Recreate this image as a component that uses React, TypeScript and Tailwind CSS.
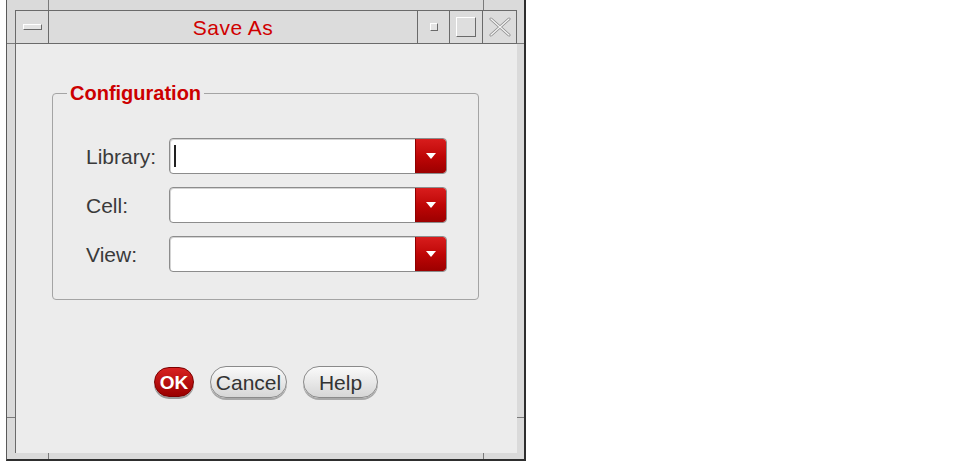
const sans = "font-['Liberation_Sans',Arial,sans-serif]";

const Combo = ({ cursor = false }: { cursor?: boolean }) => (
  <div className="flex h-[36px] w-[278px] overflow-hidden rounded-[4px] border border-[#8c8c8c] bg-white shadow-[inset_1px_1px_0_#d4d4d4]">
    <div className="flex flex-1 items-center pl-[4px]">
      {cursor && <span className="h-[22px] w-[2px] bg-[#222]" />}
    </div>
    <div className="flex w-[31px] items-center justify-center rounded-r-[3px] border-l border-[#8f0000] bg-gradient-to-b from-[#d81c1c] via-[#bf0606] to-[#9c0000]">
      <svg width="10" height="6" viewBox="0 0 10 6">
        <path d="M0 0h10L5 6z" fill="#fff" />
      </svg>
    </div>
  </div>
);

const Row = ({ label, cursor }: { label: string; cursor?: boolean }) => (
  <div className="flex items-center">
    <span className="w-[116px] shrink-0 pl-[33px] text-[21px] leading-none text-[#3a3a3a]">{label}</span>
    <Combo cursor={cursor} />
  </div>
);

const Tick = ({ className }: { className: string }) => (
  <span className={`absolute bg-[#7a7a7a] ${className}`} />
);

export default function App() {
  return (
    <div className={`flex h-[467px] w-[957px] bg-white pl-[6px] ${sans}`}>
      <div className="relative flex h-[461px] w-[520px] flex-col border-b-2 border-l border-r-2 border-b-[#2e2e2e] border-l-[#5a5a5a] border-r-[#2e2e2e] bg-[#dadada] pb-[6px] pl-[8px] pr-[7px] pt-[10px]">
        <Tick className="left-[41px] top-0 h-[10px] w-px" />
        <Tick className="left-[476px] top-0 h-[10px] w-px" />
        <Tick className="bottom-0 left-[41px] h-[6px] w-px" />
        <Tick className="bottom-0 left-[476px] h-[6px] w-px" />
        <Tick className="left-0 top-[43px] h-px w-[8px]" />
        <Tick className="left-0 top-[417px] h-px w-[8px]" />
        <Tick className="right-0 top-[43px] h-px w-[7px]" />
        <Tick className="right-0 top-[417px] h-px w-[7px]" />

        {/* title bar */}
        <div className="flex h-[34px] border border-[#6a6a6a] bg-[#dcdcdc]">
          <div className="flex w-[33px] items-center justify-center border-r border-[#6a6a6a]">
            <span className="h-[6px] w-[19px] border-b border-l border-r border-t border-b-[#6a6a6a] border-l-white border-r-[#6a6a6a] border-t-white bg-[#e4e4e4]" />
          </div>
          <div className="flex flex-1 items-center justify-center text-[21px] leading-none tracking-[0.5px] text-[#d00000]">
            Save As
          </div>
          <div className="flex w-[32px] items-center justify-center border-l border-[#6a6a6a]">
            <span className="h-[8px] w-[8px] border border-b-[#6a6a6a] border-l-white border-r-[#6a6a6a] border-t-white bg-[#e4e4e4]" />
          </div>
          <div className="flex w-[33px] items-center justify-center border-l border-[#6a6a6a]">
            <span className="h-[20px] w-[20px] border border-b-[#6a6a6a] border-l-white border-r-[#6a6a6a] border-t-white bg-[#dedede]" />
          </div>
          <div className="flex w-[34px] items-center justify-center border-l border-[#6a6a6a]">
            <svg width="24" height="22" viewBox="0 0 24 22">
              <path d="M3 3l18 16M21 3L3 19" stroke="#8a8a8a" strokeWidth="3" strokeLinecap="round" />
              <path d="M3 3l18 16M21 3L3 19" stroke="#f4f4f4" strokeWidth="1.4" strokeLinecap="round" />
            </svg>
          </div>
        </div>

        {/* content */}
        <div className="flex flex-1 flex-col border-l border-[#6a6a6a] bg-[#ececec] pl-[36px]">
          <div className="relative mt-[49px] flex h-[207px] w-[427px] flex-col gap-[13px] rounded-[4px] border border-[#a4a4a4] pt-[44px]">
            <span className="absolute left-[14px] top-[-13px] bg-[#ececec] px-[3px] text-[20px] font-bold leading-[24px] text-[#cc0000]">
              Configuration
            </span>
            <Row label="Library:" cursor />
            <Row label="Cell:" />
            <Row label="View:" />
          </div>

          <div className="mt-[66px] flex w-[465px] items-center justify-center gap-[16px] pr-[37px]">
            <button className="flex h-[30px] w-[40px] items-center justify-center rounded-full border border-[#7a0000] bg-gradient-to-b from-[#d82020] to-[#9a0000] text-[19px] font-bold leading-none text-white shadow-[0_2px_0_#9a9a9a]">
              OK
            </button>
            <button className="flex h-[32px] w-[77px] items-center justify-center rounded-full border border-[#8a8a8a] bg-gradient-to-b from-[#fafafa] to-[#d6d6d6] text-[21px] leading-none text-[#333] shadow-[0_2px_0_#a8a8a8]">
              Cancel
            </button>
            <button className="flex h-[32px] w-[75px] items-center justify-center rounded-full border border-[#8a8a8a] bg-gradient-to-b from-[#fafafa] to-[#d6d6d6] text-[21px] leading-none text-[#333] shadow-[0_2px_0_#a8a8a8]">
              Help
            </button>
          </div>
        </div>
      </div>
    </div>
  );
}
